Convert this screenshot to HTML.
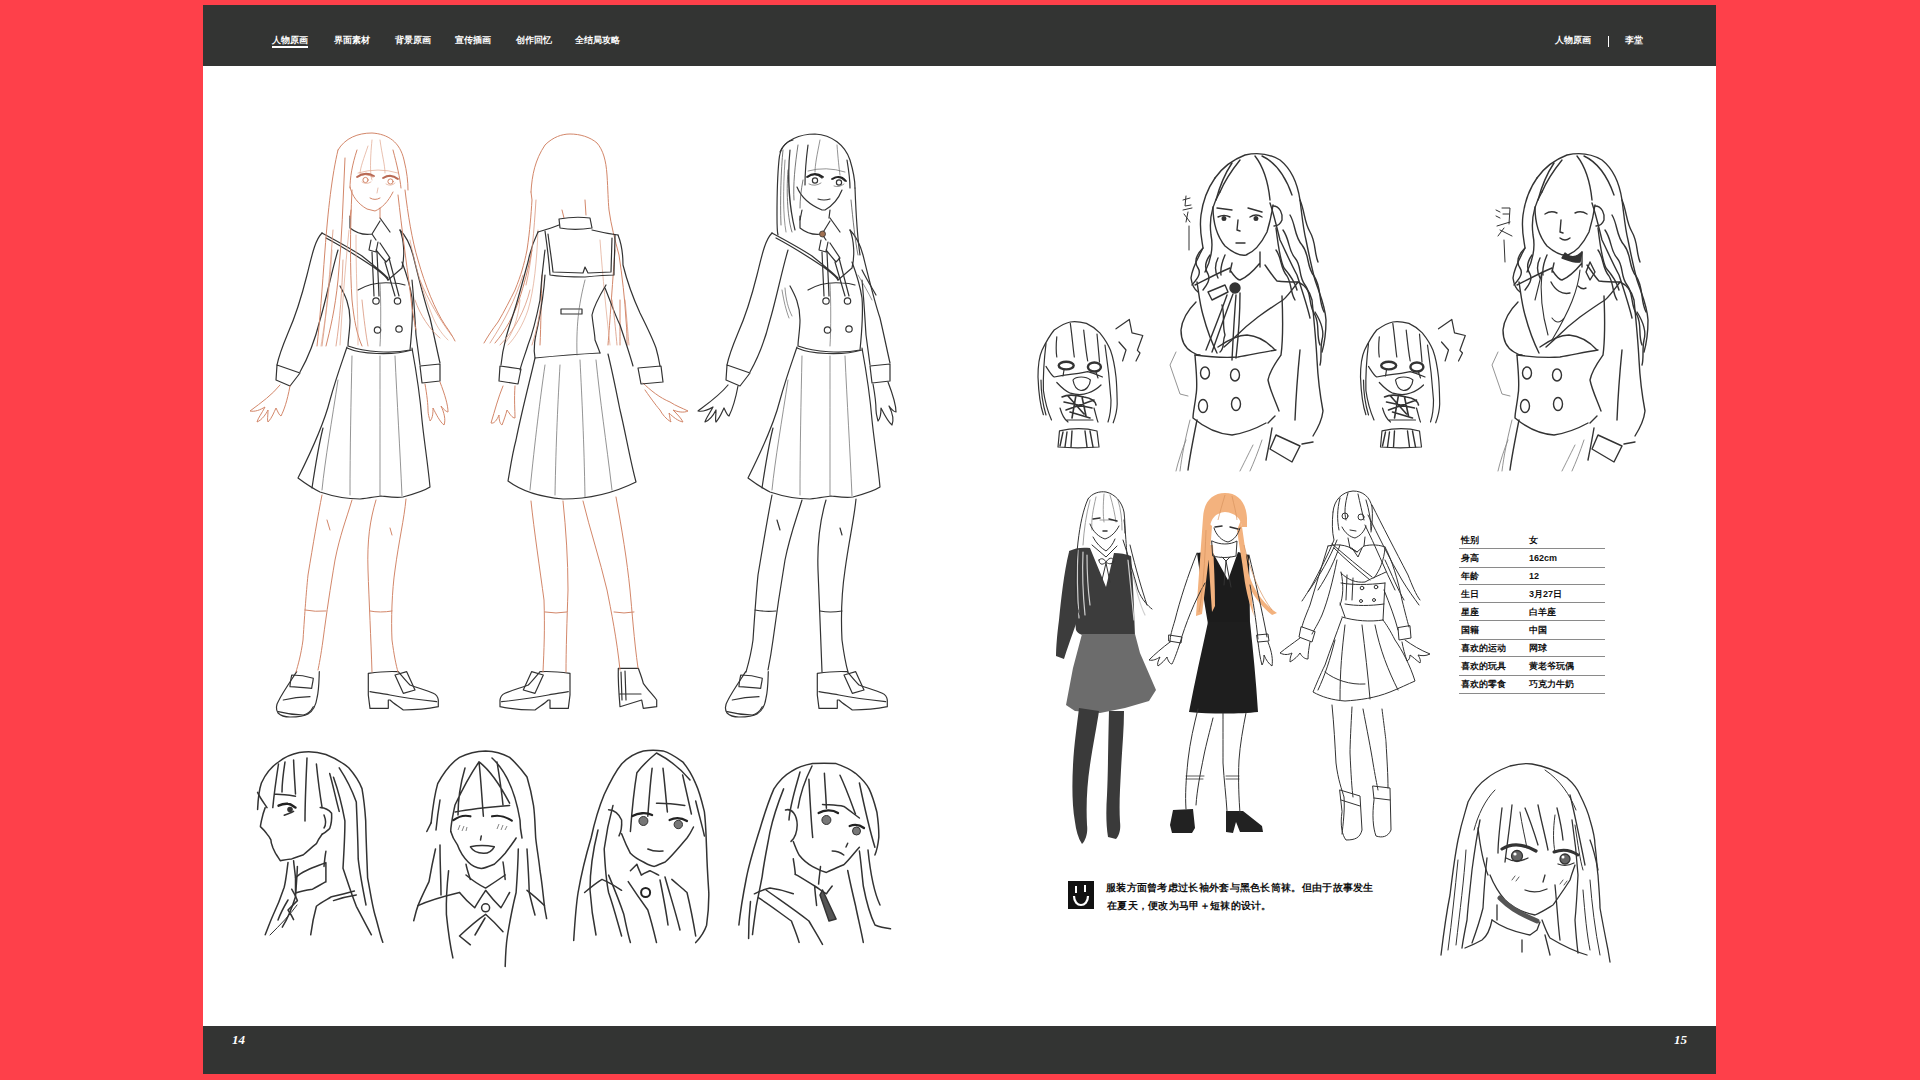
<!DOCTYPE html>
<html><head><meta charset="utf-8">
<style>
html,body{margin:0;padding:0;width:1920px;height:1080px;overflow:hidden;background:#fe404a;font-family:"Liberation Sans",sans-serif;}
#page{position:absolute;left:203px;top:5px;width:1513px;height:1069px;background:#fff;}
#hdr{position:absolute;left:0;top:0;width:1513px;height:61px;background:#333433;}
#ftr{position:absolute;left:0;top:1021px;width:1513px;height:48px;background:#333433;}
.nav{position:absolute;top:30px;color:#fff;font-size:9px;font-weight:bold;line-height:11px;white-space:nowrap;}
.pn{position:absolute;color:#fff;font-family:"Liberation Serif",serif;font-style:italic;font-weight:bold;font-size:13px;line-height:14px;}
.tb{position:absolute;font-size:9px;font-weight:bold;line-height:11px;color:#111;white-space:nowrap;}
.ln{position:absolute;left:1256px;width:146px;height:1px;background:#8a8a8a;}
.note{position:absolute;left:903px;font-size:10px;font-weight:bold;line-height:12px;color:#111;white-space:nowrap;letter-spacing:0.3px;}
svg{position:absolute;left:0;top:0;}
</style></head><body>
<div id="page">
<div id="hdr">
<div class="nav" style="left:69px">人物原画</div>
<div style="position:absolute;left:69px;top:41px;width:36px;height:1.6px;background:#fff"></div>
<div class="nav" style="left:131px">界面素材</div>
<div class="nav" style="left:192px">背景原画</div>
<div class="nav" style="left:252px">宣传插画</div>
<div class="nav" style="left:313px">创作回忆</div>
<div class="nav" style="left:372px">全结局攻略</div>
<div class="nav" style="left:1352px">人物原画</div>
<div style="position:absolute;left:1405px;top:30.5px;width:1.2px;height:11px;background:#fff"></div>
<div class="nav" style="left:1422px">李堂</div>
</div>
<div class="tb" style="left:1258px;top:529.8px">性别</div><div class="tb" style="left:1326px;top:529.8px">女</div><div class="ln" style="top:543.3px"></div>
<div class="tb" style="left:1258px;top:548.2px">身高</div><div class="tb" style="left:1326px;top:548.2px">162cm</div><div class="ln" style="top:561.7px"></div>
<div class="tb" style="left:1258px;top:565.7px">年龄</div><div class="tb" style="left:1326px;top:565.7px">12</div><div class="ln" style="top:579.2px"></div>
<div class="tb" style="left:1258px;top:583.7px">生日</div><div class="tb" style="left:1326px;top:583.7px">3月27日</div><div class="ln" style="top:597.2px"></div>
<div class="tb" style="left:1258px;top:601.8px">星座</div><div class="tb" style="left:1326px;top:601.8px">白羊座</div><div class="ln" style="top:615.3px"></div>
<div class="tb" style="left:1258px;top:620.2px">国籍</div><div class="tb" style="left:1326px;top:620.2px">中国</div><div class="ln" style="top:633.7px"></div>
<div class="tb" style="left:1258px;top:637.7px">喜欢的运动</div><div class="tb" style="left:1326px;top:637.7px">网球</div><div class="ln" style="top:651.2px"></div>
<div class="tb" style="left:1258px;top:656.0px">喜欢的玩具</div><div class="tb" style="left:1326px;top:656.0px">黄老爷玩偶</div><div class="ln" style="top:669.5px"></div>
<div class="tb" style="left:1258px;top:674.0px">喜欢的零食</div><div class="tb" style="left:1326px;top:674.0px">巧克力牛奶</div><div class="ln" style="top:687.5px"></div>
<div style="position:absolute;left:865px;top:876px;width:26px;height:28px;background:#111"></div>
<div style="position:absolute;left:872px;top:880.5px;width:2px;height:7px;background:#fff"></div>
<div style="position:absolute;left:881px;top:880px;width:2px;height:7px;background:#fff"></div>
<svg style="position:absolute;left:865px;top:876px" width="26" height="28"><path d="M6,15 C6,27 20,27 20,15" fill="none" stroke="#fff" stroke-width="2.2"/></svg>
<div class="note" style="top:877px">服装方面曾考虑过长袖外套与黑色长筒袜。但由于故事发生</div>
<div class="note" style="top:895px;left:904px">在夏天，便改为马甲＋短袜的设计。</div>
<div id="ftr">
<div class="pn" style="left:29px;top:7px">14</div>
<div class="pn" style="left:1471px;top:7px">15</div>
</div>
</div>
<svg width="1920" height="1080" viewBox="0 0 1920 1080" id="art">

<defs>
<style>
.k{fill:none;stroke:#333;stroke-width:1.2;stroke-linecap:round;stroke-linejoin:round}
.kt{fill:none;stroke:#666;stroke-width:0.7;stroke-linecap:round}
.o{fill:none;stroke:#d3876a;stroke-width:1;stroke-linecap:round;stroke-linejoin:round}
.ot{fill:none;stroke:#e0a58c;stroke-width:0.7;stroke-linecap:round}
</style>
<!-- front body (shared by F1 and F3) -->
<g id="fbody">
<!-- collar -->
<path d="M350,216 L350,228 Q360,236 372,234 L380,221 M380,218 L390,232 M372,234 L376,240"/>
<!-- sailor collar / lapels -->
<path d="M322,233 C335,240 350,248 362,256 C372,264 382,272 388,278 M326,238 C345,248 360,258 372,266 C380,272 386,276 388,280"/>
<path d="M400,230 C404,240 405,256 402,268 L388,280"/>
<!-- ribbon -->
<path d="M371,240 L369,250 L376,252 L378,242 M380,243 L390,258 L386,262 L376,250"/>
<path d="M372,252 L374,296 M377,252 L379,296 M385,262 L395,296 M389,258 L399,296"/>
<circle cx="376" cy="301" r="3.2"/><circle cx="397.5" cy="301" r="3.2"/>
<circle cx="377.5" cy="330" r="3.2"/><circle cx="399" cy="329" r="3.2"/>
<!-- vest -->
<path d="M358,290 C368,284 380,282 392,283 C398,283 402,284 405,285"/>
<path d="M340,286 C345,295 350,305 350,320 C350,330 348,340 348,346 C365,352 392,354 410,350 C412,330 413,310 412,298 C410,285 405,270 402,262"/>
<!-- left sleeve -->
<path d="M322,233 C315,240 312,255 307,275 C302,295 296,315 288,333 C283,345 279,355 277,365"/>
<path d="M338,250 C332,270 326,300 320,320 C315,340 308,358 300,372"/>
<path d="M277,365 L276,380 L290,386 L300,373 Z"/>
<!-- right sleeve -->
<path d="M400,230 C406,236 410,244 413,255 C418,275 424,300 430,318 C434,335 437,350 440,363"/>
<path d="M412,280 C414,300 415,320 416,335 C418,350 419,358 420,365"/>
<path d="M420,366 L422,383 L440,381 L440,364 Z"/>
<!-- skirt -->
<path d="M347,347 C342,362 336,378 330,400 C325,420 312,450 298,478 C306,484 312,488 320,492 C332,496 345,499 360,499 C368,498 374,497 381,496 C390,497 396,498 403,497 C414,494 424,491 430,487 C428,465 424,440 422,420 C420,395 416,370 412,348"/>
<path d="M347,348 C360,354 392,356 412,350"/>
<path d="M323,428 C318,448 315,468 312,488"/>
</g>
<g id="fbodyt">
<path d="M352,356 C351,400 350,450 350,495 M380,356 C380,400 380,450 380,496 M395,356 C397,400 400,450 402,496 M338,380 C332,420 325,460 322,490"/>
<path d="M380,284 C381,300 381,330 380,346"/>
</g>
<g id="flegs">
<path d="M322,495 C318,515 313,545 308,575 C306,595 305,610 303,640 C301,655 298,665 296,672"/>
<path d="M352,500 C346,520 340,535 335,560 C330,590 327,610 323,640 C321,655 319,665 318,670"/>
<path d="M376,500 C370,520 367,540 368,570 C369,600 371,640 372,672"/>
<path d="M406,499 C404,520 399,540 395,570 C392,590 391,620 392,640 C394,655 396,665 398,672"/>
<path d="M305,610 Q315,612 326,611 M370,611 Q380,613 392,611"/>
<path d="M327,520 L330,530 M390,528 L392,535"/>
</g>
<g id="fshoes">
<path d="M296.7,671.7 C290,682 283,692 279,700 C276,705 276,710 278,713 C281,716 285,717 290,717 C297,717 303,717 308,714 C313,711 316,705 317,698 C319,690 319,680 319.3,671.7"/>
<path d="M291.7,675 C299,675 306,676 313.3,678.3 C313,682 312,685 311.7,688.3 C304,688 297,687 290,686.7 C290,683 291,679 291.7,675 Z"/>
<path d="M283.3,700 C292,698 301,697 310,696.7 M278.3,711.7 C287,714 296,715 303.3,715 C308,714 311,711 313.3,706.7"/>
<path d="M368.3,673.3 C378,672 388,671 398.3,671.7 C402,676 406,681 410,685 C418,688 426,690 433.3,693.3 C437,695 438,697 438.3,700 L438.3,706.7 C427,709 415,710 403.3,710 C398,706 393,703 390,700 L388.3,700 L388.3,708.3 L370,708.3 L368.3,695 Z"/>
<path d="M395,675 L406.7,671.7 L415,690 L403.3,693.3 Z M370,691.7 C377,693 384,694 390,695 C405,698 421,700 436.7,701.7"/>
</g>
</defs>
<!--ART-->

<!-- F1 -->
<g>
<use href="#fbody" class="k"/>
<use href="#fbodyt" class="kt"/>
<use href="#fshoes" class="k"/>
<use href="#flegs" class="o"/>
<g class="o">
<path d="M338,150 C345,138 358,133 372,133 C388,134 400,142 404,160 C407,172 408,182 408,190"/>
<path d="M338,150 C332,175 328,210 325,250 C322,290 320,320 317,346"/>
<path d="M345,158 C343,200 342,240 338,280 C335,310 330,330 326,346"/>
<path d="M352,190 C350,230 350,270 352,300 C354,320 357,335 362,346"/>
<path d="M405,190 C408,215 412,240 418,260 C425,285 435,310 445,325 C450,332 453,337 455,341"/>
<path d="M398,195 C402,230 406,260 410,290 C412,310 414,320 416,330"/>
<path d="M357,150 C352,165 350,178 350,188 M393,150 C397,165 400,178 401,188"/>
<path d="M350,187 C352,196 358,204 367,209 L375,211 C382,208 388,202 393,192"/>
<path d="M358,177 Q365,172 373,177 M384,178 Q390,174 397,179 M370,198 Q375,201 380,198"/>
<circle cx="365.5" cy="180" r="2.6"/><circle cx="390.5" cy="181.5" r="2.6"/>
<path d="M351,210 L350,218 M380,208 L380,218"/>
<path d="M280,385 C272,395 262,402 250,411 C255,412 260,410 265,407 C262,413 258,418 257,422 C262,420 266,414 268,410 C268,416 267,420 268,422 C272,418 274,412 276,408 C278,412 279,415 281,416 C284,410 287,402 290,386"/>
<path d="M425,384 C427,395 428,405 428,410 C428,415 430,420 430,421 C433,418 433,412 433,408 C436,414 440,422 444,425 C446,420 444,412 441,406 C444,410 447,412 448,412 C448,405 445,395 440,382"/>
</g>
<g class="ot">
<path d="M349,230 C345,270 342,310 340,345 M356,235 C356,280 358,310 358,345 M332,250 C330,290 325,320 321,346"/>
<path d="M410,240 C416,270 424,295 432,315 C436,325 440,332 448,340"/>
<path d="M368,146 C364,158 360,168 360,174 M380,140 C382,155 385,165 385,173 M372,140 C370,160 370,175 372,180 M358,173 Q378,167 398,173"/>
<path d="M362,182 Q366,185 371,182 M386,184 Q391,187 395,183 M378,188 L377,193"/>
</g>
</g>
<!-- F3 -->
<g>
<use href="#fbody" class="k" transform="translate(450,0)"/>
<use href="#fbodyt" class="kt" transform="translate(450,0)"/>
<use href="#fshoes" class="k" transform="translate(449,0)"/>
<use href="#flegs" class="k" transform="translate(450,0)"/>
<g class="k">
<path d="M780,152 C785,140 800,134 815,134 C832,135 845,145 850,160 C853,170 855,180 855,188"/>
<path d="M793,140 C785,142 780,148 779,160 C777,180 777,200 777,215 C777,225 777,232 778,235"/>
<path d="M790,150 C787,180 790,210 795,230"/>
<path d="M855,188 C856,215 857,235 860,255"/>
<path d="M862,270 C867,280 872,288 876,295"/>
<path d="M808,145 C806,160 805,175 805,185 M847,160 C849,172 850,180 850,188"/>
<path d="M797,187 C801,197 810,205 822,210 L825,210 C832,206 838,200 842,190"/>
<path d="M808,177 Q815,172 822,178 M833,179 Q839,175 845,181 M818,199 Q824,201 830,199"/>
<circle cx="815" cy="180.5" r="2.6"/><circle cx="839" cy="182.5" r="2.6"/>
<path d="M802,210 L800,220 M830,210 L829,218"/>
<path d="M728,385 C720,395 710,402 698,411 C703,412 708,410 713,407 C710,413 706,418 705,422 C710,420 714,414 716,410 C716,416 715,420 716,422 C720,418 722,412 724,408 C726,412 727,415 729,416 C732,410 735,402 738,386"/>
<path d="M873,384 C875,395 876,405 876,410 C876,415 878,420 878,421 C881,418 881,412 881,408 C884,414 888,422 892,425 C894,420 892,412 889,406 C892,410 895,412 896,412 C896,405 893,395 888,382"/>
</g>
<g class="kt">
<path d="M785,160 C783,190 783,215 786,232 M858,275 C864,285 868,292 872,300 M785,288 C786,300 788,308 792,316 M782,290 C784,302 786,310 789,318"/>
<path d="M820,140 C817,155 815,165 815,172 M837,145 C838,158 839,168 840,175 M808,171 Q826,166 845,172"/>
<path d="M809,184 Q815,187 821,183 M834,186 Q839,188 844,184"/>
</g>
<circle cx="822.5" cy="234" r="3" fill="#a07050" stroke="#333" stroke-width="0.8"/>
</g>

<!-- F2 back -->
<g>
<g class="o">
<path d="M531,192 C532,175 535,160 545,145 C553,137 562,134 570,134 C580,134 590,137 597,143 C603,150 606,160 607,175 C608,190 608,200 609,210 C611,225 615,240 619,255 C622,275 625,300 626,320 C627,330 627,338 627,345"/>
<path d="M531,192 L532,200 C531,215 530,230 527,250 C524,265 521,275 515,290 C510,300 505,310 498,322 C492,330 488,336 484,343"/>
<path d="M532,250 C528,270 524,285 519,300 C514,315 506,330 495,343"/>
<path d="M542,275 C541,300 541,325 540,345 M615,250 C612,290 610,320 608,345 M620,300 C620,320 620,335 620,345"/>
<path d="M562,210 L564,218 M585,200 L586,215"/>
<path d="M503,386 C498,398 495,410 491,423 C494,424 497,420 499,415 C499,420 500,424 502,425 C504,420 506,414 507,410 C510,414 512,418 515,418 C515,410 514,400 515,386"/>
<path d="M643,383 C650,390 660,398 670,402 C676,406 682,408 688,411 C684,413 678,412 673,410 C677,414 681,418 683,422 C678,421 673,417 669,413 C670,417 670,420 671,422 C666,419 662,414 660,410 C658,408 652,400 645,390"/>
</g>
<g class="ot">
<path d="M538,230 C537,260 534,290 528,310 C523,325 515,338 508,345 M600,240 C603,280 606,310 610,345 M520,300 C518,320 512,335 505,343"/>
</g>
<g class="k">
<path d="M559,219 C570,217 582,217 590,218 L592,228 C580,230 570,230 560,228 Z"/>
<path d="M559,225 C552,228 545,230 538,232 M592,230 C600,232 610,234 618,235"/>
<path d="M545,231 C547,245 549,260 550,275 C562,277 574,277 585,277 C595,276 605,275 614,275 C614,262 615,248 615,235"/>
<path d="M548,234 C550,250 552,262 553,272 L583,273 L585,267 L588,273 L611,272 L612,238"/>
<path d="M545,275 C544,290 542,305 538,325 C535,338 533,348 535,358 C555,356 580,354 600,353"/>
<path d="M606,285 C600,295 594,305 592,315 C593,325 595,335 595,340 C597,345 599,350 600,353"/>
<path d="M561,309 L582,309 L582,314 L561,314 Z"/>
<path d="M538,232 C533,242 530,252 528,262 C523,280 518,300 513,315 C508,330 503,345 501,365"/>
<path d="M545,250 C543,265 541,285 540,300 C536,320 532,335 528,345 C525,355 522,362 520,370"/>
<path d="M500,366 L499,381 L518,384 L521,369 Z"/>
<path d="M618,235 C622,245 623,255 623,265 C628,285 634,300 640,313 C646,325 652,337 656,348 C658,355 659,360 660,366"/>
<path d="M605,288 C610,300 615,315 620,325 C625,340 630,355 633,366"/>
<path d="M638,368 L641,384 L663,382 L661,366 Z"/>
<path d="M535,358 C530,380 522,410 516,440 C512,455 510,470 508,481 C520,490 540,497 563,499 C585,499 612,494 636,482 C630,460 625,430 620,410 C616,390 612,370 608,354"/>
<g transform="translate(938.3,0) scale(-1,1)">
<path d="M368.3,673.3 C378,672 388,671 398.3,671.7 C402,676 406,681 410,685 C418,688 426,690 433.3,693.3 C437,695 438,697 438.3,700 L438.3,706.7 C427,709 415,710 403.3,710 C398,706 393,703 390,700 L388.3,700 L388.3,708.3 L370,708.3 L368.3,695 Z"/>
<path d="M395,675 L406.7,671.7 L415,690 L403.3,693.3 Z M370,691.7 C377,693 384,694 390,695 C405,698 421,700 436.7,701.7"/>
</g>
<path d="M618.3,668.3 L638.3,668.3 C640,673 642,678 643.3,683.3 C648,690 653,695 656.7,700 L656.7,706.7 L643.3,708.3 L641.7,700 L620,706.7 C619,695 618,680 618.3,668.3 Z M621,672 L622,700 M625,671 L626,700 M620,694 L641,694"/>
</g>
<g class="kt">
<path d="M585,280 C580,300 576,320 577,355 M545,365 C540,400 535,440 530,490 M560,365 C558,400 556,440 555,495 M580,360 C582,400 584,440 585,497 M596,360 C600,400 606,440 612,490"/>
</g>
</g>
<g class="o"><path d="M531,501 C534,530 540,570 544,600 C545,630 544,650 543,672 M563,501 C566,530 568,560 568,590 C567,620 566,650 566,672 M583,501 C590,530 600,560 607,590 C611,610 617,640 620,670 M616,497 C622,530 627,560 630,590 C632,610 634,640 638,668"/>
<path d="M545,612 Q556,614 567,612 M614,612 Q624,614 634,612"/>
</g>

<!-- H1 profile -->
<g class="k" style="stroke-width:1.5">
<path d="M257.6,809.5 C258,800 259,790 261.4,783 C266,773 271,767 278.5,762 C285,757 292,754 299.3,752.6 C309,751 318,752 325.9,754.5 C335,758 342,762 348.7,767.8 C355,775 359,781 362,788.6 C364,800 365,810 365.7,820.9 C366,840 367,860 367.6,877.8 C370,890 372,905 375.2,915.8 C378,925 380,935 382.8,942.3"/>
<path d="M278.5,764 C276,780 274,795 272.8,807.6 M293.6,760 C294,772 295,785 295.5,794 M307,758 C306,780 305,800 305,821 M316.4,764 C318,780 320,795 322.1,807.6 M329.7,773.5 C333,785 336,800 339.2,811.4 M257.6,792.4 C260,798 264,803 267,807.6 M285,762 C283,775 282,785 282,792"/>
<path d="M274.7,794.3 C281,794 288,795 295.5,796.2"/>
<path d="M284.2,815.2 C287,814 291,813 293.6,811.4"/>
<path d="M265.2,807.6 C263,813 262,818 261.4,820.9 C261,823 260.5,825 260.4,826.6 C263,829 265,831 267.1,834.2 C269,836 270,838 270.9,839.9 C271,843 272,845 272.8,847.5 C274,850 275,853 276.6,855 C278,857 279,859 280.4,860.7 C284,860 288,859 291.7,858.9 C296,857 300,856 303.1,855 C308,851 312,847 316.4,843.7 C318,840 320,837 322.1,834.2"/>
<path d="M320.2,807.6 C325,808 329,810 331.6,813.3 C332,820 331,825 329.7,828.5 C327,831 325,833 322.1,834.2 M324,815 C326,820 326,825 324,828"/>
<path d="M293.6,860.7 C294,866 295,872 295.5,877.8 M325.9,851.3 C325,856 324.5,861 324,866.4"/>
<path d="M295.5,877.8 C299,874 303,872 307,870.2 C314,867 320,865 325.9,862.6 M295.5,893 C301,891 307,890 312.6,889.2 C318,886 322,884 325.9,881.6 M295.5,878 L295.5,893 M325.9,863 L325.9,882"/>
<path d="M333.5,777.3 C338,790 342,805 344.9,820.9 C345,835 344,850 343,868.3 C347,880 351,893 356.3,906.3 C361,915 366,925 371.4,934.8"/>
<path d="M339.2,767.8 C346,778 352,790 356.3,801.9 C357,820 358,840 358.2,858.9 C360,875 363,890 366,905"/>
<path d="M331.6,896.8 C339,895 347,893 354.4,891.1 M333.5,900.6 C341,898 349,896 356.3,894.9 M316.4,906.3 C314,915 312,925 310.7,934.8 M331,897 C326,900 320,903 316.4,906.3"/>
<path d="M288,862.6 C287,870 286,880 284.2,887.3 C281,897 277,907 272.8,915.8 C270,922 268,928 265.2,934.8 M297.4,866.4 C297,878 296,888 295.5,896.8 C292,908 288,918 282.3,927.2"/>
<path d="M291.7,889.2 C294,893 296,897 297.4,900.6 C294,904 291,907 288,910 C290,913 292,916 293.6,919.6 M288,900 C285,905 281,912 278,920"/>
<path d="M297,905 C290,915 280,925 270,935" style="stroke-width:1"/>
</g>
<g fill="none" stroke="#222" stroke-width="2.4" stroke-linecap="round"><path d="M278.5,805.7 C282,804 285,803.5 288,803.8 C291,804 293,806 295.5,807.6"/></g>
<circle cx="290" cy="809.5" r="2.8" fill="#333"/>
<!-- H2 -->
<g class="k" style="stroke-width:1.5">
<path d="M431.1,822.8 C433,805 435,793 437.7,783.6 C444,772 451,763 459.5,757.4 C468,753 477,751 485.6,750.9 C494,751 502,753 509.6,757.4 C517,764 522,770 527,777 C530,787 532,796 533.5,805.4 C535,816 535,827 535.7,838 C537,850 539,860 540,870.7 C542,882 543,894 544.4,905.6 C545,911 546,915 546.6,918.6"/>
<path d="M431.1,822.8 L426.8,831.5 M435.5,849 C433,860 431,870 429,881.6 C425,890 421,898 418,905.6 C416,911 415,916 413.7,920.8 M448.6,870.7 C447,885 446,900 446.4,914.3 C448,930 450,945 452.9,957.9 M440,845 C440,865 441,880 441,895"/>
<path d="M479,761.8 C470,775 462,790 455,805 C453,815 451,823 450.7,831.5 M479,761.8 C481,780 482,800 483.4,816.3 M479,761.8 C490,770 500,785 509.6,803.2 M492,758 C505,770 515,790 520,820 C520,828 521,833 522,838 M465,768 C460,785 458,800 458,815 M497,762 C500,780 502,795 503,805 M440,800 C438,812 437,820 436,830"/>
<path d="M455.1,811.9 C470,809 490,807 509.6,805.4"/>
<path d="M481.3,835.9 L480.5,840"/>
<path d="M470.4,846.8 C478,845 486,845 494.3,846.8 C492,851 488,853.5 483.4,853.3 C477,853 473,851 470.4,846.8 Z"/>
<path d="M450.8,831.5 C452,836 454,840 457.3,844.6 C460,852 464,858 468.2,862 C472,866 476,868 481.3,868.5 C486,868 490,866 494.3,864.2 C498,861 502,857 505.2,853.3 C509,848 513,843 516.1,838"/>
<path d="M466,864.2 C467,870 469,875 470.4,879.4 M503,862 C504,868 504.5,874 505.2,879.4"/>
<path d="M466,875 C472,880 479,885 485.6,888.1 C492,884 498,880 505.2,875"/>
<path d="M459.5,892.5 C464,898 469,903 474.7,907.8 C478,902 482,896 485.6,890.3 C490,896 495,902 500.9,907.8 C504,903 507,897 509.6,892.5"/>
<circle cx="485.6" cy="907.8" r="4"/>
<path d="M459.5,936 C468,928 477,920 485.6,914.3 C492,920 498,926 503,931.7 M470.4,944.8 L459.5,936 M475,935 L485,918"/>
<path d="M418,905.6 C430,900 445,896 459.5,892.5 M527,890.3 C533,895 539,900 544.4,905.6"/>
<path d="M518.3,849 C518,865 517,880 516.1,892.5 C513,905 510,920 507.4,936 C506,945 505.5,955 505.2,966.6 M527,849 C528,865 529,880 529.2,892.5 C531,900 533,908 535,915"/>
</g>
<g fill="none" stroke="#222" stroke-width="2.2" stroke-linecap="round"><path d="M453.4,820.2 C459,816 465,815 470.4,816.3 M492.1,816.3 C498,815 505,816 511.8,820.6"/></g>
<g fill="none" stroke="#666" stroke-width="0.8"><path d="M458,830 L460,825 M462,831 L464,826 M466,831 L467,827 M497,829 L499,824 M501,830 L503,825 M505,830 L507,826"/></g>
<!-- H3 -->
<g class="k" style="stroke-width:1.5">
<path d="M573.7,940.4 C575,920 576,905 578.1,892.5 C582,870 586,855 591.1,838 C595,820 599,807 604.2,794.5 C610,782 615,772 621.6,764 C628,757 635,753 643.4,750.9 C650,750 656,750 663,750.9 C670,753 676,757 682.6,761.8 C688,768 692,775 695.7,783.6 C700,793 702,802 704.4,811.9 C706,825 706,837 706.6,848.9 C707,865 708,880 708.8,892.5 C709,905 708,915 706.6,925.2 C704,933 700,938 695.7,942.6"/>
<path d="M608.6,809.7 C614,810 619,814 621.6,820 C622,826 621,832 619,835.9"/>
<path d="M621.6,833.7 C624,840 627,847 630.4,853.3 C635,858 639,860 643.4,862 C647,864 650,866 654.3,866.4 C658,865 662,863 665.2,862 C673,855 680,846 687,838 C690,834 692,830 693.5,827"/>
<path d="M647.8,849 C652,851 658,851.5 663,851.1"/>
<path d="M656.5,753 C648,760 642,766 636.9,772.7 C634,790 632,810 630.4,831.5 M652.1,768.3 C650,785 649,800 647.8,816.3 M663,768.3 C665,785 666,800 667.4,811.9 M682.6,774.9 C686,790 689,803 691.4,814 M695.7,801 C699,815 702,825 704.4,835.9 M656.5,753 C670,760 680,768 690,780"/>
<path d="M656.5,803.2 C665,803 675,804 684.8,805.4"/>
<path d="M636.9,864.2 C638,868 640,872 641.3,875.1 C644,873 647,872 650,870.7 C653,872 656,874 658.7,875.1 M630.4,870.7 L636.9,864.2"/>
<path d="M584.6,892.5 C590,888 596,883 602,879.4 C608,882 615,886 621.6,890.3"/>
<path d="M628.2,881.6 C635,892 642,902 647.8,910 C651,920 654,932 656.5,942.6 M608.6,875.1 C614,888 619,900 623.8,914.3 C626,925 628,935 630.4,942.6"/>
<path d="M671.8,879.4 C677,884 682,888 687,892.5 C690,905 693,920 695.7,936 M660,880 C663,895 666,910 668,925 M665,877 C670,895 675,910 680,930"/>
<path d="M613,805.4 C609,820 606,835 604.2,849 C605,865 606,880 608.6,892.5 C613,905 617,920 621.6,936 M598,830 C593,850 590,870 590,890 C591,905 593,920 596,935"/>
</g>
<g fill="none" stroke="#222" stroke-width="2.3" stroke-linecap="round"><path d="M632.5,816 C638,813 646,812 652.1,815 M669.6,820 C676,817 682,818 687,821"/></g>
<g fill="#777" stroke="#333" stroke-width="1"><circle cx="643.4" cy="821" r="4.5"/><circle cx="678.3" cy="824.5" r="4.2"/></g>
<circle cx="645.6" cy="892.5" r="4.5" fill="none" stroke="#222" stroke-width="2"/>
<!-- H4 -->
<g class="k" style="stroke-width:1.5">
<path d="M738.9,925 C741,905 744,890 746.7,876.3 C750,860 755,845 760.3,827.7 C765,812 769,800 773.9,788.9 C779,781 785,775 791.4,771.4 C798,767 805,765 812.7,763.6 C820,763 828,763 836.1,763.6 C843,766 850,769 855.5,773.3 C861,778 866,783 869.1,788.9 C873,797 875,805 876.9,812.2 C878,820 879,830 878.8,837.5 C878,845 877,850 874.9,855"/>
<path d="M783.6,788.9 C778,803 773,818 770,831.6 C767,848 764,862 762.2,876.3 C760,888 758,897 756.4,905.5 C755,915 753.5,925 752.5,934.6"/>
<path d="M785.5,810 C792,808 797,815 797.2,825 C797,833 795,838 791,841.4"/>
<path d="M793.3,841.4 C795,846 797,851 799.1,855 C803,860 808,864 812.7,866.6 C817,869 821,871 826.4,872.4 C832,870 838,867 843.8,864.7 C849,860 854,853 859.4,847.2"/>
<path d="M808.9,779.2 C810,800 811,820 812.7,837.5 M824.4,773.3 C825,785 826,797 826.4,808.3 M840,775.3 C846,788 851,802 855.5,814.1 M859.4,783 C864,805 869,828 874.9,847.2 M800,772 C795,790 790,805 789,820 M812,766 C805,780 800,795 798,808"/>
<path d="M822.5,804.4 C830,805 837,805 843.8,806.4 C849,810 854,814 859.4,818"/>
<path d="M832.2,851 C836,851 840,852 843.8,855 M847.7,843.3 L846,847"/>
<path d="M793.3,858.8 C794,864 795,869 795.3,874.4 M820.5,866.6 C820,872 819,878 818.6,884.1"/>
<path d="M795.3,874.4 C802,878 808,882 814.7,886 C815,893 816,899 816.6,905.5 M814.7,886 C818,888 822,891 826.4,893.8 C828,891 830,889 832.2,886"/>
<path d="M822.5,890 L836.1,919 L829,921 L820,895 Z" fill="#555"/>
<path d="M754.4,893.8 C760,891 765,889 770,888 C778,889 786,891 793.3,893.8"/>
<path d="M766.1,890 C780,900 795,910 808.9,921 C813,928 818,936 822.5,944.4 M758.3,897.7 C770,905 780,913 791.4,921 C794,928 797,935 799.1,942.4"/>
<path d="M750.5,901.6 C749,915 748.5,927 748.6,938.5"/>
<path d="M859.4,851 C861,862 862,875 863.3,886 C866,900 870,915 875,925 C880,927 885,928 890.5,928.8 M847.7,870.5 C850,882 853,895 855.5,905.5 C858,918 861,930 863.3,942.4 M868,850 C870,870 873,890 880,905"/>
</g>
<g fill="none" stroke="#222" stroke-width="2.3" stroke-linecap="round"><path d="M818.6,813 C824,810 832,809 838,813 M849.7,826 C855,824 860,825 864,828"/></g>
<g fill="#777" stroke="#333" stroke-width="1"><circle cx="826.4" cy="820" r="4.5"/><circle cx="856.5" cy="831" r="4"/></g>
<!-- heads row -->
<g class="k" style="stroke-width:1.5">
</g>

<!-- right page busts -->
<defs>
<g id="bust">
<path d="M1215,178 C1222,168 1232,160 1245,155 C1258,152 1270,154 1280,160 C1290,168 1297,180 1300,200 C1302,215 1303,228 1306,240 C1309,255 1311,265 1315,280 C1320,295 1325,305 1326,320 C1326,332 1324,345 1322,352"/>
<path d="M1215,178 C1208,188 1203,200 1201,215 C1199,230 1202,240 1203,248 C1198,258 1192,268 1191,278 C1192,285 1195,290 1198,292"/>
<path d="M1220,192 C1212,205 1209,220 1211,235 C1214,250 1210,262 1205,272 M1225,255 C1222,262 1220,268 1221,275"/>
<path d="M1270,203 C1274,215 1277,228 1280,240 C1285,250 1290,262 1297,275 C1302,290 1307,305 1310,318"/>
<path d="M1276,228 C1278,245 1280,260 1284,268 C1290,275 1295,282 1297,290"/>
<path d="M1240,160 C1232,170 1225,180 1220,192 M1255,156 C1262,165 1268,180 1270,200 M1262,156 C1275,162 1285,175 1292,195 M1232,163 C1226,172 1220,185 1216,200"/>
<path d="M1203,248 C1196,255 1194,262 1198,268 C1202,274 1196,280 1192,285 M1210,255 C1205,262 1204,268 1208,274 C1211,280 1206,286 1203,290 M1218,258 C1214,266 1215,272 1218,278"/>
<path d="M1283,230 C1290,240 1288,250 1295,258 C1302,266 1298,276 1305,285 C1312,294 1308,305 1315,315 C1320,325 1316,335 1320,345 M1290,215 C1296,225 1294,236 1302,245 C1310,255 1306,266 1314,276 C1322,288 1318,300 1324,312 M1276,250 C1282,258 1280,268 1287,276 C1292,284 1290,292 1295,300 M1300,200 C1305,212 1304,222 1310,232 C1316,242 1314,252 1318,262"/>
<path d="M1213,207 C1213,220 1216,235 1225,246 C1232,252 1240,256 1246,255 C1254,252 1262,242 1267,232 C1270,222 1272,212 1273,205"/>
<path d="M1273,206 C1280,206 1283,214 1282,220 C1280,225 1277,226 1274,226"/>
<path d="M1232,263 L1230,272 M1260,252 L1260,267 M1230,270 C1234,276 1237,280 1240,280 C1245,278 1250,275 1260,263"/>
<path d="M1195,285 C1205,280 1218,273 1230,268 M1197,282 C1199,295 1200,305 1203,315 C1207,330 1212,343 1217,353"/>
<path d="M1265,265 C1270,272 1274,278 1277,281 C1285,282 1292,282 1298,282 C1292,290 1287,297 1283,300 C1275,305 1265,312 1258,317 C1250,323 1242,330 1235,337 C1230,342 1226,345 1224,347"/>
<path d="M1196,302 C1188,310 1182,320 1181,330 C1181,340 1185,348 1192,352 C1195,354 1198,355 1200,355"/>
<path d="M1195,355 C1210,357 1225,358 1238,357 C1250,355 1263,352 1276,350"/>
<path d="M1218,347 C1228,340 1238,335 1247,335 C1258,336 1266,340 1275,350"/>
<path d="M1195,355 C1196,370 1198,385 1196,395 C1195,405 1193,412 1193,418 C1205,428 1218,434 1232,435 C1245,433 1257,428 1266,423"/>
<path d="M1282,296 C1283,320 1283,340 1281,355 C1276,362 1270,370 1268,380 C1270,390 1275,400 1279,411 M1275,416 L1268,423"/>
<path d="M1298,282 C1305,285 1310,292 1312,300 C1314,320 1316,340 1317,360 C1318,380 1320,395 1323,411 C1322,420 1318,428 1313,436 M1300,350 C1298,370 1296,395 1295,420"/>
<path d="M1276,435 L1270,449 L1292,462 L1300,446 Z M1302,444 L1313,442"/>
<ellipse cx="1205" cy="373" rx="4.5" ry="6"/><ellipse cx="1235" cy="375" rx="4.5" ry="6"/>
<ellipse cx="1203" cy="406" rx="4.5" ry="6.5"/><ellipse cx="1236" cy="404" rx="4.5" ry="6.5"/>

<path style="stroke:#888;stroke-width:0.9" d="M1176,352 L1170,365 L1180,394 L1188,396 M1190,420 C1185,440 1182,455 1180,471 M1186,440 C1182,450 1178,462 1176,471 M1253,445 C1248,455 1243,465 1240,471 M1262,440 C1258,452 1254,462 1250,471"/><path d="M1272,428 C1270,440 1268,450 1266,460 M1197,420 C1193,440 1190,455 1188,470"/>
<path d="M1315,312 C1320,320 1325,330 1322,340 C1320,350 1322,358 1320,365"/>
</g>
</defs>
<g class="k" style="stroke-width:1.4">
<use href="#bust"/>
<use href="#bust" transform="translate(322,0)"/>
<!-- B1 specifics: ribbon, face -->
<path d="M1217,208 L1232,210 M1248,208 L1262,212"/>
<path d="M1218,217 Q1224,214 1230,217 M1250,217 Q1256,213 1262,217"/>
<circle cx="1224" cy="218.5" r="1.8" fill="#333"/><circle cx="1256" cy="218.5" r="1.8" fill="#333"/>
<path d="M1238,220 L1237,230 L1240,231 M1236,243 L1245,243"/>
<circle cx="1235" cy="288" r="5" fill="#333"/>
<path d="M1208,292 L1225,285 L1228,292 L1212,300 Z"/>
<path d="M1227,295 C1220,315 1212,335 1206,350 M1233,294 C1225,315 1218,335 1212,352 M1236,295 C1234,320 1233,340 1232,360 M1240,293 C1240,315 1238,340 1236,358"/>
<path d="M1222,305 C1225,315 1222,325 1225,335 C1222,342 1225,348 1220,352"/>
<!-- B2 specifics -->
<path d="M1545,214 Q1551,210 1557,213 M1575,213 Q1581,210 1587,214"/>
<path d="M1561,220 L1560,232 L1563,233 M1560,238 Q1565,242 1570,238"/>
<path d="M1565,253 C1570,258 1576,258 1582,252 L1580,262 C1574,263 1568,260 1562,258 Z" fill="#333"/>
<path d="M1551,282 C1555,290 1562,295 1570,293 M1578,286 Q1582,290 1586,288"/>
<path d="M1542,272 C1540,290 1541,310 1548,335 M1580,270 C1578,290 1570,310 1552,340 M1552,318 Q1558,326 1564,318 M1535,300 L1542,272" style="stroke-width:1.1"/>
<path d="M1590,262 L1595,272 L1590,280 L1586,272 Z"/>
<!-- doodles -->
<path d="M1183,200 L1190,198 M1186,196 L1185,206 L1191,205 M1183,210 L1192,208 M1184,214 L1190,222 M1188,212 L1186,222 M1189,250 L1189,226" style="stroke-width:1"/>
<path d="M1496,210 L1500,212 M1496,216 L1500,218 M1502,208 L1510,208 L1509,224 M1503,214 L1509,214 M1497,226 L1510,222 M1500,230 L1512,236 M1504,228 L1498,236 M1505,262 L1504,240" style="stroke-width:1"/>
</g>
<!-- chibis -->
<defs>
<g id="chibi">
<path d="M1043.4,414.7 C1040,405 1038.5,390 1038,377 C1038,365 1039,357 1042,350.3 C1046,342 1050,335 1054.2,330 C1060,326 1065,323 1070.3,322 C1076,321 1081,322 1086.4,323.4 C1092,326 1096,329 1099.8,332.8 C1104,338 1108,344 1110.5,350.3 C1114,360 1115,368 1116,377 C1117,387 1117,395 1117.2,404 C1117,412 1115,418 1113.2,422.8"/>
<path d="M1046,343.6 C1044,360 1043,375 1043.4,390.5 C1045,402 1048,412 1051.5,420 M1105,345 C1108,365 1110,385 1111,400 C1111,410 1110,416 1108,422 M1041,380 C1041,395 1043,405 1046,415"/>
<path d="M1056.8,336.8 C1056,345 1056,352 1056.8,357 M1070.3,323.4 C1072,335 1073,348 1074.3,357 M1083.7,330 C1085,342 1086,352 1087.7,361 M1097,334 C1098,345 1099,355 1099.5,362"/>
<ellipse cx="1066.2" cy="365.6" rx="7.5" ry="3.8" style="stroke-width:2.4"/>
<ellipse cx="1094.4" cy="367" rx="6.5" ry="4.5" style="stroke-width:2.4"/>
<path d="M1046,366.4 C1049,371 1051,375 1054.2,377 C1059,376 1064,375 1070.3,374.4 C1076,374 1082,373 1087.7,371.7 C1093,373 1098,375 1102.5,377 M1096,372 L1098,378 M1064,370 L1063,376"/>
<path d="M1073,380 C1076,376 1086,376 1090.4,380 C1090,386 1086,390.5 1081,390.5 C1077,390 1074,386 1073,380 Z"/>
<path d="M1056.8,382.5 C1061,387 1065,391 1070.3,393.2 C1077,395 1083,395 1088,393 C1094,391 1098,388 1101,385"/>
<path d="M1062,397 C1068,394 1076,395 1084,397 C1090,398 1095,400 1096,405 M1064,402 L1092,408 M1068,396 L1084,414 M1076,395 L1072,418 M1082,397 L1086,416 M1066,410 L1094,400 M1070,412 L1090,418" style="stroke-width:1.6"/>
<path d="M1060,408 C1062,415 1065,420 1068,422 M1094,408 C1096,415 1097,420 1098,422 M1066,420 L1093,420"/>
<path d="M1059.5,430.8 C1072,428 1086,428 1097,431 L1099,447 C1085,448 1070,448 1058,447 Z"/>
<path d="M1063,432 L1060,446 M1067,432 L1065,447 M1072,431 L1071,447 M1085,431 L1087,447 M1090,431 L1093,447" style="stroke-width:1.4"/>
<path d="M1116,328.8 L1129.3,319.4 L1132,332.8 L1142.8,335.5 L1137.4,350.3 L1140,353 L1136,361 M1122.6,361 L1126,350 L1119,342"/>
</g>
</defs>
<g class="k" style="stroke-width:1.2">
<use href="#chibi"/>
<use href="#chibi" transform="translate(322.5,0)"/>
</g>

<!-- G1 dark outfit -->
<g>
<path d="M1069,551 C1075,548 1082,547 1090,548 L1106,587 L1114,553 C1120,553 1126,554 1131,556 C1133,580 1134,605 1135,636 L1090,636 C1083,636 1078,634 1076,630 C1074,610 1072,580 1069,551 Z" fill="#3c3c3c"/>
<path d="M1069,552 C1064,572 1061,600 1059,620 C1057,635 1056,648 1056,656 L1064,659 C1070,640 1076,625 1081,609 L1079,560 Z" fill="#3c3c3c"/>
<path d="M1082,634 L1135,634 L1140,653 L1156,690 L1149,701 L1125,708 L1100,713 L1075,711 L1066,705 L1073,668 Z" fill="#6c6c6c"/>
<path d="M1079,708 L1099,711 C1097,725 1093,745 1090,765 C1087,785 1086,805 1087,825 C1088,832 1086,840 1082,844 C1078,838 1076,830 1075,822 C1072,805 1072,785 1073,765 C1074,745 1077,725 1079,708 Z" fill="#3a3a3a"/>
<path d="M1109,711 L1124,711 C1124,730 1122,750 1121,770 C1120,790 1119,805 1120,822 C1121,830 1119,836 1116,839 L1108,837 C1106,825 1106,810 1107,795 C1108,775 1108,750 1109,711 Z" fill="#3a3a3a"/>
<g fill="none" stroke="#cfcfcf" stroke-width="1.2" stroke-linecap="round">
<path d="M1078,550 C1077,570 1077,590 1079,618 M1083,552 C1082,575 1083,595 1085,615 M1087,555 C1087,575 1088,590 1090,605 M1128,560 C1130,580 1132,600 1134,620 M1132,570 C1136,590 1140,605 1145,615"/>
</g>
<g fill="none" stroke="#888" stroke-width="0.8" stroke-linecap="round">
<path d="M1090,500 C1086,515 1084,530 1083,545 M1096,497 C1093,510 1091,520 1092,530 M1104,494 C1103,505 1103,515 1104,522 M1110,495 C1113,505 1115,515 1116,522 M1118,500 C1121,510 1122,520 1122,530 M1100,520 L1112,520"/>
</g>
<g class="k" style="stroke-width:1">
<path d="M1088,499 C1092,493 1100,491 1106,492 C1115,494 1122,502 1124,512 C1125,520 1125,528 1125,533"/>
<path d="M1088,499 C1083,510 1080,525 1078,542 C1076,560 1075,585 1076,600 C1077,608 1079,613 1080,615"/>
<path d="M1123,540 C1128,555 1133,572 1138,590 C1142,600 1148,606 1152,609 M1130,545 C1136,570 1142,590 1147,605 M1124,520 C1126,535 1126,545 1127,555"/>
<path d="M1090,524 C1093,532 1099,537 1105,539 C1111,537 1116,532 1119,526"/>
<path d="M1093,519 L1100,518 M1109,519 L1117,521 M1103,531 L1107,531" style="stroke-width:1.5"/>
<path d="M1093,537 C1096,543 1101,548 1106,551 C1110,548 1113,544 1115,539 M1092,545 L1106,557 L1117,546"/>
<path d="M1099,560 C1103,556 1106,562 1106,562 C1110,556 1114,558 1114,562 C1110,566 1106,562 1106,562 C1102,566 1099,564 1099,560 Z M1106,563 L1102,580 M1106,563 L1110,582"/>
</g>
</g>
<!-- G2 orange hair / black dress -->
<g>
<path d="M1197,553 L1212,551 L1228,580 L1238,552 L1249,555 L1250,624 L1208,624 C1204,600 1200,575 1197,553 Z" fill="#1c1c1c"/>
<path d="M1208,622 L1250,622 C1253,650 1256,680 1258,712 C1240,714 1210,714 1189,712 C1195,680 1202,650 1208,622 Z" fill="#1e1e1e"/>
<path d="M1173,810 L1193,809 L1195,828 L1192,833 L1172,833 L1170,825 Z M1226,811 L1243,811 L1262,826 L1263,832 L1240,832 L1236,822 L1233,833 L1226,832 Z" fill="#222"/>
<g fill="#f3b27e">
<path d="M1203,520 C1203,502 1212,493 1225,493 C1238,493 1246,502 1247,518 L1247,527 L1242,527 C1241,519 1236,513 1225,512 C1215,513 1211,519 1210,527 L1203,527 Z"/>
<path d="M1203,518 C1201,545 1199,575 1196,616 L1202,614 C1205,590 1208,565 1211,540 L1212,526 Z M1208,545 C1209,570 1211,595 1212,612 L1215,606 C1215,585 1214,565 1213,545 Z"/>
<path d="M1241,520 C1244,540 1246,555 1249,575 C1254,590 1264,605 1277,613 L1272,615 C1262,607 1255,598 1251,590 C1252,600 1253,610 1254,616 C1250,606 1246,592 1244,576 C1242,560 1239,545 1237,530 Z"/>
</g>
<g class="k" style="stroke-width:1">
<path d="M1214,528 C1216,535 1222,541 1228,542 C1234,540 1238,535 1240,528"/>
<path d="M1215,527 L1222,526 M1230,527 L1238,529" style="stroke-width:1.5"/>
<path d="M1212,541 C1220,545 1230,545 1237,541 L1236,556 C1228,558 1220,558 1213,556 Z M1222,557 L1226,561 L1230,557 M1226,561 L1224,585 M1226,561 L1231,587"/>
<path d="M1197,553 C1188,575 1180,600 1175,620 C1172,630 1170,636 1170,642 M1180,643 C1185,625 1195,600 1205,583"/>
<path d="M1169,635 L1182,637 L1181,643 L1169,641 Z"/>
<path d="M1170,642 C1162,648 1155,654 1149,660 C1153,661 1157,659 1160,657 C1158,661 1157,664 1158,666 C1162,663 1165,660 1167,657 C1168,661 1170,664 1172,664 C1174,660 1176,655 1180,643"/>
<path d="M1249,555 C1255,580 1262,610 1267,637 M1258,639 C1256,620 1253,600 1250,585"/>
<path d="M1257,635 L1268,634 L1269,641 L1258,642 Z"/>
<path d="M1258,642 C1259,650 1260,658 1262,665 C1264,662 1264,658 1264,655 C1266,660 1269,664 1272,666 C1273,660 1272,652 1268,642"/>
<path d="M1198,709 C1194,725 1190,742 1188,760 C1186,780 1185,795 1186,809 M1213,718 C1210,730 1206,745 1204,755 C1200,775 1197,790 1196,805 M1223,713 C1223,730 1223,750 1223,763 C1224,780 1226,795 1227,811 M1246,713 C1243,728 1240,745 1239,760 C1238,780 1239,800 1240,813"/>
<path d="M1186,776 L1204,776 M1226,776 L1239,776 M1186,779 L1203,779 M1226,779 L1239,779" style="stroke-width:0.8"/>
</g>
<g fill="none" stroke="#d9935f" stroke-width="0.7">
<path d="M1206,530 C1205,560 1203,590 1199,612 M1244,545 C1250,570 1260,595 1272,610 M1225,495 C1222,505 1220,512 1218,520 M1232,496 C1234,505 1236,512 1237,520"/>
</g>
</g>
<!-- G3 light sketch figure -->
<g class="k" style="stroke-width:1">
<path d="M1333,512 C1334,500 1342,492 1353,491 C1363,491 1370,497 1372,507 C1373,515 1372,525 1371,532"/>
<path d="M1333,512 C1332,522 1332,532 1334,540 C1328,555 1320,570 1312,585 C1308,592 1304,598 1302,601 M1337,540 C1330,558 1320,575 1308,592 M1340,545 C1335,560 1328,575 1318,590"/>
<path d="M1340,498 C1337,510 1337,520 1339,530 M1348,493 C1345,503 1344,513 1346,520 M1358,494 C1360,503 1362,512 1364,520 M1366,500 C1369,510 1371,520 1371,530"/>
<path d="M1368,515 C1378,535 1390,560 1402,580 C1408,590 1414,598 1419,605 M1372,505 C1382,525 1395,550 1408,575 C1412,585 1416,595 1420,600 M1365,525 C1375,545 1385,570 1395,590 M1385,560 C1392,575 1398,590 1404,600"/>
<path d="M1342,527 C1345,533 1350,537 1355,538 C1360,536 1364,532 1366,526"/>
<circle cx="1345" cy="516" r="3"/><circle cx="1361" cy="517" r="3"/>
<path d="M1350,530 L1356,531"/>
<path d="M1348,538 L1350,548 L1357,552 L1364,546 L1365,537 M1352,548 L1358,557 L1362,548"/>
<path d="M1328,546 C1340,543 1350,546 1357,552 M1364,546 C1372,544 1380,545 1385,547"/>
<path d="M1328,546 C1322,565 1316,585 1310,605 C1306,615 1303,622 1302,627 M1337,560 C1333,580 1328,600 1322,615 C1318,624 1314,630 1312,634"/>
<path d="M1301,627 L1299,637 L1312,642 L1315,632 Z"/>
<path d="M1300,638 C1292,644 1286,648 1280,653 C1284,655 1288,655 1292,653 C1290,657 1290,660 1290,662 C1295,659 1298,656 1300,653 C1302,657 1305,659 1308,659 C1308,653 1309,648 1310,642"/>
<path d="M1385,547 C1392,560 1398,580 1402,600 C1405,612 1407,620 1409,627 M1384,590 C1390,605 1395,618 1398,630"/>
<path d="M1398,628 L1399,640 L1411,638 L1410,626 Z"/>
<path d="M1405,640 C1412,645 1420,650 1430,654 C1426,656 1422,656 1418,655 C1420,658 1421,661 1420,663 C1416,660 1413,657 1410,655 C1410,658 1409,660 1407,661 C1405,655 1403,648 1402,642"/>
<path d="M1332,544 C1345,555 1360,568 1372,577 M1334,548 C1346,560 1358,570 1370,580 M1385,548 C1384,560 1380,570 1374,578"/>
<path d="M1341,572 C1344,585 1343,598 1340,605 M1347,575 L1346,600 M1353,578 L1352,600"/>
<path d="M1341,573 C1348,580 1356,583 1365,582 C1372,578 1380,575 1386,572"/>
<path d="M1341,583 C1352,585 1368,585 1385,583 M1345,604 C1356,606 1370,606 1384,604 M1340,603 L1345,617 M1385,583 L1383,620"/>
<circle cx="1362" cy="588" r="1.8"/><circle cx="1376" cy="587" r="1.8"/>
<circle cx="1361" cy="601" r="1.5"/><circle cx="1374" cy="600" r="1.5"/>
<path d="M1342,617 C1355,621 1370,622 1383,620"/>
<path d="M1342,618 C1336,635 1330,650 1325,665 C1320,675 1316,685 1313,692 C1322,697 1332,700 1345,701 C1360,700 1375,698 1390,692 C1400,688 1408,684 1415,681 C1410,665 1402,650 1395,640 C1390,630 1386,624 1383,620"/>
<path d="M1335,640 C1330,660 1325,675 1318,690 M1345,625 C1342,650 1340,670 1340,700 M1362,625 C1365,650 1368,675 1370,699 M1375,625 C1380,650 1388,670 1398,690 M1325,672 C1335,680 1350,685 1365,684"/>
<path d="M1332,705 C1334,725 1335,745 1336,763 C1338,780 1342,790 1344,797 C1345,810 1343,825 1342,834 M1352,707 C1351,725 1350,745 1350,753 C1351,775 1352,790 1353,797 M1363,709 C1367,730 1371,750 1373,763 C1375,775 1377,785 1378,790 M1382,709 C1384,725 1386,740 1386,742 C1387,760 1388,775 1388,788"/>
<path d="M1340,790 L1360,796 L1362,830 C1360,838 1355,840 1346,840 C1342,835 1340,825 1342,812 Z M1373,786 L1390,788 L1391,830 C1388,837 1382,838 1376,836 C1373,828 1372,815 1374,800 Z M1341,800 L1360,806 M1374,798 L1390,800"/>
</g>
<!-- H5 -->
<g class="k" style="stroke-width:1.3">
<path d="M1441,955 C1444,930 1447,910 1450,895 C1453,870 1455,855 1458,840 C1462,820 1466,810 1468,802 C1474,790 1480,783 1486,779 C1494,772 1502,769 1510,766 C1518,764 1525,763 1532,764 C1545,766 1555,770 1567,778 C1574,784 1578,790 1580,795 C1585,805 1588,812 1590,820 C1593,830 1595,840 1595,845 C1597,860 1597,870 1598,875 C1599,890 1600,900 1600,908 C1603,925 1606,940 1608,950 L1610,962"/>
<path d="M1480,820 C1476,840 1474,855 1472,870 C1470,890 1468,905 1467,920 C1465,930 1463,940 1462,948"/>
<path d="M1487,858 C1485,875 1484,890 1483,908 C1480,920 1476,932 1472,943"/>
<path d="M1572,820 C1575,840 1577,860 1578,875 C1577,895 1576,910 1575,920 C1576,935 1577,945 1578,953"/>
<path d="M1555,885 C1557,905 1558,925 1560,940"/>
<path d="M1502,808 C1500,825 1498,840 1498,853 M1512,805 C1510,825 1507,845 1505,862 M1525,808 C1530,820 1534,832 1538,845 M1538,805 C1541,820 1545,835 1548,850 M1557,808 C1560,820 1562,830 1563,840 M1570,795 C1575,815 1580,840 1585,865 M1590,840 C1594,850 1596,860 1598,870"/>
<path d="M1478,828 C1480,845 1482,860 1488,875"/>
<path d="M1490,875 C1494,885 1498,892 1505,900 C1512,907 1520,912 1535,915 C1542,912 1548,908 1553,905 C1560,895 1565,888 1570,880 C1572,873 1574,868 1575,865"/>
<path d="M1502,849 C1510,844 1522,843 1536,851" style="stroke-width:3.2"/>
<path d="M1554,852 C1562,849 1571,850 1578,855" style="stroke-width:3"/>
<circle cx="1517" cy="856" r="5.5" fill="#666"/><circle cx="1565" cy="859" r="5" fill="#666"/>
<circle cx="1515" cy="854" r="1.6" fill="#fff" stroke="none"/><circle cx="1563" cy="857" r="1.5" fill="#fff" stroke="none"/>
<path d="M1520,812 C1522,825 1525,838 1527,848 M1555,815 C1553,830 1553,842 1555,852 M1575,825 C1578,845 1580,860 1583,870 M1458,860 C1455,890 1452,920 1448,950 M1466,850 C1464,880 1460,910 1456,945 M1590,880 C1592,905 1595,930 1600,955 M1583,890 C1585,915 1587,935 1590,950 M1495,790 C1485,800 1478,815 1474,830 M1545,770 C1560,780 1570,795 1576,810" style="stroke-width:1"/>
<path d="M1512,880 L1515,876 M1516,881 L1519,877 M1560,884 L1563,880 M1564,885 L1567,881" style="stroke-width:0.8"/>
<path d="M1506,858 Q1516,864 1528,858 M1558,864 Q1566,867 1574,863"/>
<path d="M1545,875 L1543,882 M1525,890 C1530,892 1538,893 1547,889"/>
<path d="M1500,898 C1508,906 1516,912 1537,921" style="stroke-width:5;stroke:#555"/>
<path d="M1497,905 L1497,920 M1492,920 C1500,926 1515,932 1530,935 L1537,930 L1540,922"/>
<path d="M1542,920 C1545,928 1548,935 1550,938 C1560,944 1570,950 1587,955"/>
<path d="M1492,920 C1490,930 1486,937 1482,940 C1475,944 1470,946 1465,948"/>
<path d="M1522,940 L1522,952 M1545,935 L1550,955"/>
</g>

<!-- heads extra detail -->
<g class="k" style="stroke-width:1.2">







</g>
<g fill="none" stroke="#222" stroke-width="2.2" stroke-linecap="round">

</g>
<g fill="#333">

</g>

<!-- extra hair strands -->
<g class="ot" style="stroke:#d9957c;stroke-width:0.8">
<path d="M523,275 C515,300 505,320 490,343 M530,290 C525,310 515,330 500,345 M540,310 C538,325 535,335 532,345 M612,300 C615,320 616,335 617,345 M625,300 C627,320 628,335 629,345 M536,200 C534,230 532,260 526,285"/>
<path d="M333,230 C330,270 327,310 322,346 M343,260 C342,290 340,320 336,346 M415,300 C420,315 430,330 440,338 M420,280 C428,300 440,320 452,336 M362,300 C364,320 366,335 368,346"/>
</g>
<g class="kt" style="stroke:#555;stroke-width:0.8">
<path d="M783,150 C781,170 780,200 781,225 M788,170 C786,195 788,220 792,232 M798,145 C795,165 793,185 794,200 M851,200 C853,220 855,240 858,255 M803,180 C801,190 800,200 800,208"/>
</g>

<g fill="none" stroke-linecap="round">
<path d="M357,177 Q365,171 374,176 M383,178 Q391,173 398,179" stroke="#b86a55" stroke-width="1.8"/>
<path d="M807,177 Q815,171 823,177 M832,179 Q840,174 846,181" stroke="#222" stroke-width="1.8"/>
</g>
<!--ART2-->
</svg>
</body></html>
